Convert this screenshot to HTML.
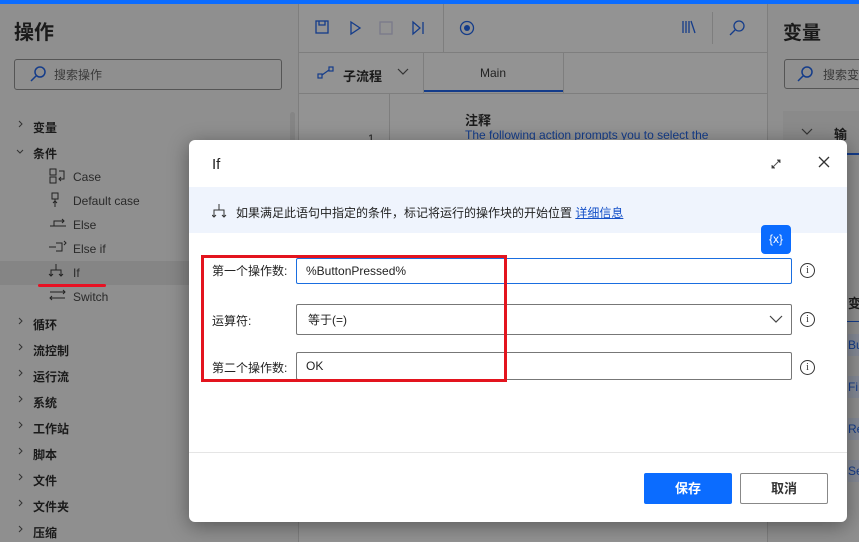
<!DOCTYPE html>
<html><head><meta charset="utf-8"><style>
*{box-sizing:border-box;margin:0;padding:0}
html,body{background:#8f8f8f}
body{width:859px;height:542px;overflow:hidden;position:relative;font-family:"Liberation Sans","Noto Sans CJK SC",sans-serif;color:#1a1a1a}
.a{position:absolute}
.top{left:0;top:0;width:859px;height:4px;background:#0b6cff;z-index:5}
.tree{font-size:12px;font-weight:bold;color:#1a1a1a}
.sub{font-size:12px;color:#2a2a2a}
.dlg{left:189px;top:140px;width:658px;height:382px;background:#fff;border-radius:6px;z-index:3;box-shadow:0 4px 20px rgba(0,0,0,.4)}
.lbl{font-size:12px;color:#222}
.inp{border:1px solid #777;border-radius:2px;background:#fff;font-size:12px;color:#222;padding-left:9px;display:flex;align-items:center}
.info{width:15px;height:15px;border:1.3px solid #333;border-radius:50%;font-size:10px;text-align:center;line-height:13px;font-family:"Liberation Serif",serif;color:#333}
</style></head><body>
<svg class="a" style="left:0;top:0" width="859" height="542">
<rect x="0" y="0" width="859" height="542" fill="#8f8f8f"/>
<rect x="299" y="4" width="468" height="538" fill="#939393"/>
<rect x="298" y="4" width="1" height="538" fill="#7e7e7e"/>
<rect x="767" y="4" width="1" height="538" fill="#7e7e7e"/>
<rect x="0" y="261" width="190" height="24" fill="#858585"/>
<rect x="783" y="111" width="80" height="44" fill="#8a8a8a"/>
<rect x="848" y="334" width="12" height="22" fill="#858a96"/>
<rect x="848" y="376" width="12" height="22" fill="#858a96"/>
<rect x="848" y="418" width="12" height="22" fill="#858a96"/>
<rect x="848" y="460" width="12" height="22" fill="#858a96"/>
</svg>
<div class="a top"></div>
<div class="a" style="left:14px;top:16px;font-size:20px;font-weight:bold">操作</div>
<div class="a" style="left:14px;top:59px;width:268px;height:31px;border:1px solid #555;border-radius:3px"></div>
<svg class="a" style="left:28px;top:64px" width="20" height="20"><circle cx="12" cy="8" r="5" fill="none" stroke="#143c8a" stroke-width="1.5"/><line x1="8" y1="12" x2="3" y2="17" stroke="#143c8a" stroke-width="1.5"/></svg>
<div class="a" style="left:54px;top:66px;font-size:12px;color:#3a3a3a">搜索操作</div>
<div class="a" style="left:290px;top:112px;width:5px;height:40px;background:#858585;border-radius:3px"></div>
<svg class="a" style="left:15px;top:118px" width="12" height="420" fill="none" stroke="#333" stroke-width="1">
<path d="M4 3l3 3-3 3"/><path d="M2 32l3 3 3-3"/>
<path d="M4 200l3 3-3 3M4 226l3 3-3 3M4 252l3 3-3 3M4 278l3 3-3 3M4 304l3 3-3 3M4 330l3 3-3 3M4 356l3 3-3 3M4 382l3 3-3 3M4 408l3 3-3 3"/>
</svg>
<div class="a tree" style="left:33px;top:119px">变量</div>
<div class="a tree" style="left:33px;top:145px">条件</div>
<div class="a sub" style="left:73px;top:170px">Case</div>
<div class="a sub" style="left:73px;top:194px">Default case</div>
<div class="a sub" style="left:73px;top:218px">Else</div>
<div class="a sub" style="left:73px;top:242px">Else if</div>
<div class="a sub" style="left:73px;top:266px">If</div>
<div class="a sub" style="left:73px;top:290px">Switch</div>
<svg class="a" style="left:48px;top:166px" width="20" height="140" fill="none" stroke="#222" stroke-width="1">
<rect x="2" y="3" width="6" height="6"/><rect x="2" y="11" width="6" height="6"/><path d="M11 5h5v8h-4M13 11l-2 2 2 2"/>
<rect x="4" y="27" width="6" height="6"/><path d="M7 33v8M5 37l2-2 2 2"/>
<path d="M2 60h4v-5h10M14 53l2 2-2 2M6 60h12"/>
<path d="M1 81h7M8 77h6v8h-6M16 75l2 2-2 2"/>
<path d="M8 98v6M3 110v-6h10v6M1 108l2 2 2-2M11 108l2 2 2-2"/>
<path d="M2 126h15M15 124l2 2-2 2M17 132h-15M4 130l-2 2 2 2"/>
</svg>
<div class="a" style="left:38px;top:284px;width:68px;height:3px;background:#e81123;border-radius:2px;z-index:4"></div>
<div class="a tree" style="left:33px;top:316px">循环</div>
<div class="a tree" style="left:33px;top:342px">流控制</div>
<div class="a tree" style="left:33px;top:368px">运行流</div>
<div class="a tree" style="left:33px;top:394px">系统</div>
<div class="a tree" style="left:33px;top:420px">工作站</div>
<div class="a tree" style="left:33px;top:446px">脚本</div>
<div class="a tree" style="left:33px;top:472px">文件</div>
<div class="a tree" style="left:33px;top:498px">文件夹</div>
<div class="a tree" style="left:33px;top:524px">压缩</div>
<div class="a" style="left:299px;top:52px;width:468px;height:1px;background:#7e7e7e"></div>
<div class="a" style="left:299px;top:93px;width:468px;height:1px;background:#7e7e7e"></div>
<div class="a" style="left:443px;top:4px;width:1px;height:48px;background:#7e7e7e"></div>
<div class="a" style="left:423px;top:53px;width:1px;height:40px;background:#7e7e7e"></div>
<div class="a" style="left:563px;top:53px;width:1px;height:40px;background:#7e7e7e"></div>
<div class="a" style="left:424px;top:90px;width:139px;height:2px;background:#143c8a"></div>
<svg class="a" style="left:312px;top:18px" width="120" height="20" fill="none" stroke="#143c8a" stroke-width="1.3">
<rect x="4" y="3" width="12" height="12"/><path d="M7 3v4h6V3"/>
<path d="M39 4l9 6-9 6z"/><rect x="68" y="4" width="12" height="12" stroke="#7a7a8a"/><path d="M101 4l7 6-7 6zM111 4v12"/></svg>
<svg class="a" style="left:458px;top:19px" width="20" height="18"><circle cx="9" cy="9" r="6.5" fill="none" stroke="#143c8a" stroke-width="1.3"/><circle cx="9" cy="9" r="3" fill="#143c8a"/></svg>
<div class="a" style="left:712px;top:12px;width:1px;height:32px;background:#7e7e7e"></div>
<svg class="a" style="left:678px;top:18px" width="80" height="20" fill="none" stroke="#143c8a" stroke-width="1.3"><path d="M5 3v12M8 3v12M11 3v12M13 3l4 12"/><circle cx="61" cy="8" r="5"/><path d="M57 12l-5 5"/></svg>
<svg class="a" style="left:316px;top:65px" width="20" height="16" fill="none" stroke="#143c8a" stroke-width="1.2"><rect x="2" y="9" width="4" height="4"/><rect x="13" y="2" width="4" height="4"/><path d="M6 10l7-5"/></svg>
<div class="a" style="left:343px;top:66px;font-size:13px;font-weight:bold">子流程</div>
<svg class="a" style="left:396px;top:67px" width="14" height="10" fill="none" stroke="#333" stroke-width="1.2"><path d="M2 2l5 5 5-5"/></svg>
<div class="a" style="left:480px;top:66px;font-size:12px;color:#222">Main</div>
<div class="a" style="left:389px;top:94px;width:1px;height:60px;background:#7e7e7e"></div>
<div class="a" style="left:368px;top:133px;font-size:11px">1</div>
<div class="a" style="left:465px;top:110px;font-size:13px;font-weight:bold">注释</div>
<div class="a" style="left:465px;top:128px;font-size:12px;color:#143c8a">The following action prompts you to select the</div>
<div class="a" style="left:783px;top:18px;font-size:19px;font-weight:bold">变量</div>
<div class="a" style="left:784px;top:59px;width:90px;height:30px;border:1px solid #555;border-radius:3px"></div>
<svg class="a" style="left:795px;top:64px" width="20" height="20"><circle cx="12" cy="8" r="5" fill="none" stroke="#143c8a" stroke-width="1.5"/><line x1="8" y1="12" x2="3" y2="17" stroke="#143c8a" stroke-width="1.5"/></svg>
<div class="a" style="left:823px;top:66px;font-size:12px;color:#3a3a3a">搜索变</div>
<div class="a" style="left:783px;top:153px;width:80px;height:2px;background:#143c8a"></div>
<svg class="a" style="left:800px;top:127px" width="14" height="10" fill="none" stroke="#333" stroke-width="1.2"><path d="M2 2l5 5 5-5"/></svg>
<div class="a" style="left:834px;top:124px;font-size:13px;font-weight:bold">输入</div>
<div class="a" style="left:848px;top:293px;font-size:13px;font-weight:bold">变</div>
<div class="a" style="left:847px;top:321px;width:12px;height:1px;background:#143c8a"></div>
<div class="a" style="left:848px;top:334px;font-size:12px;color:#143c8a;width:12px;height:22px;line-height:22px;overflow:hidden">Bu</div>
<div class="a" style="left:848px;top:376px;font-size:12px;color:#143c8a;width:12px;height:22px;line-height:22px;overflow:hidden">Fi</div>
<div class="a" style="left:848px;top:418px;font-size:12px;color:#143c8a;width:12px;height:22px;line-height:22px;overflow:hidden">Re</div>
<div class="a" style="left:848px;top:460px;font-size:12px;color:#143c8a;width:12px;height:22px;line-height:22px;overflow:hidden">Se</div>
<div class="a dlg">
<div class="a" style="left:23px;top:16px;font-size:15px;color:#222">If</div>
<svg class="a" style="left:580px;top:17px" width="14" height="14" stroke="#555" stroke-width="1"><path d="M4 10l6-6M8 3h3v3M3 8v3h3"/></svg>
<svg class="a" style="left:628px;top:15px" width="14" height="14" stroke="#333" stroke-width="1.3"><path d="M2 2l10 10M12 2L2 12"/></svg>
<div class="a" style="left:0;top:47px;width:658px;height:46px;background:#eff4fd"></div>
<svg class="a" style="left:23px;top:63px" width="16" height="16" fill="none" stroke="#333" stroke-width="1"><path d="M7 1v6M2 14V7h10v7M0 12l2 2 2-2M10 12l2 2 2-2"/></svg>
<div class="a" style="left:47px;top:64px;font-size:12px;color:#222">如果满足此语句中指定的条件，标记将运行的操作块的开始位置 <span style="color:#1450c8;text-decoration:underline">详细信息</span></div>
<div class="a" style="left:572px;top:85px;width:30px;height:29px;background:#0b6cff;border-radius:4px;color:#fff;font-size:12px;text-align:center;line-height:29px">{x}</div>
<div class="a" style="left:12px;top:115px;width:306px;height:127px;border:3px solid #e3141e;z-index:2"></div>
<div class="a lbl" style="left:23px;top:122px">第一个操作数:</div>
<div class="a inp" style="left:107px;top:118px;width:496px;height:26px;border-color:#1a6ee0">%ButtonPressed%</div>
<div class="a lbl" style="left:23px;top:172px">运算符:</div>
<div class="a inp" style="left:107px;top:164px;width:496px;height:31px;padding-left:11px">等于(=)</div>
<svg class="a" style="left:580px;top:174px" width="14" height="10" fill="none" stroke="#444" stroke-width="1.2"><path d="M1 2l6 6 6-6"/></svg>
<div class="a lbl" style="left:23px;top:219px">第二个操作数:</div>
<div class="a inp" style="left:107px;top:212px;width:496px;height:28px">OK</div>
<div class="a info" style="left:611px;top:123px">i</div>
<div class="a info" style="left:611px;top:172px">i</div>
<div class="a info" style="left:611px;top:220px">i</div>
<div class="a" style="left:0;top:312px;width:658px;height:1px;background:#e5e5e5"></div>
<div class="a" style="left:455px;top:333px;width:88px;height:31px;background:#0b6cff;border-radius:2px;color:#fff;font-size:13px;font-weight:bold;text-align:center;line-height:31px">保存</div>
<div class="a" style="left:551px;top:333px;width:88px;height:31px;border:1px solid #888;border-radius:2px;font-size:13px;font-weight:bold;text-align:center;line-height:29px;color:#333">取消</div>
</div>
</body></html>
